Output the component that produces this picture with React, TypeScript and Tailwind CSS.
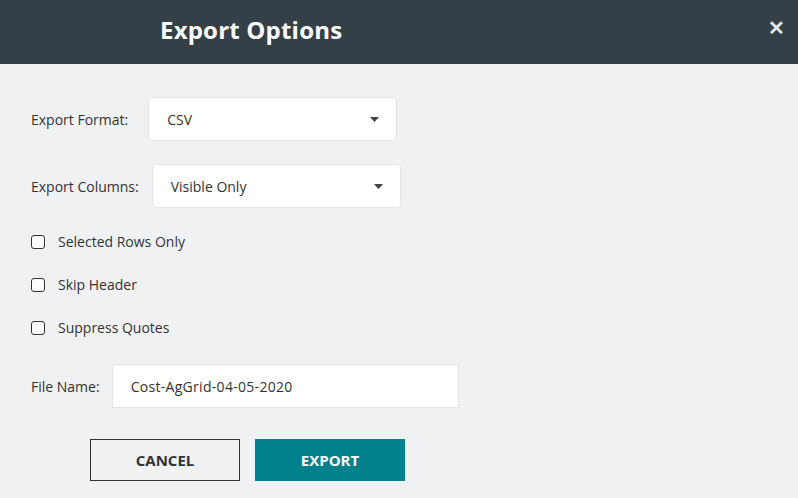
import { useState } from 'react';

function Caret() {
  return (
    <svg width="9" height="5" viewBox="0 0 9 5" aria-hidden="true">
      <path d="M0 0h9L4.5 5z" fill="#444" />
    </svg>
  );
}

function SelectBox({ value }: { value: string }) {
  return (
    <div className="flex h-[44px] w-[249px] items-center justify-between rounded-[4px] border border-[#e3e4e7] bg-white pl-[18px] pr-[17px] text-[14px] text-[#333]">
      <span>{value}</span>
      <Caret />
    </div>
  );
}

function Check({ label }: { label: string }) {
  const [on, setOn] = useState(false);
  return (
    <label className="flex h-[43px] cursor-pointer items-center gap-[13px] text-[14px] text-[#333]">
      <span
        onClick={() => setOn(!on)}
        className="h-[14px] w-[14px] rounded-[3px] border-[1.5px] border-[#333] bg-white"
      />
      {label}
    </label>
  );
}

export default function App() {
  return (
    <div
      className="flex h-[498px] w-[798px] flex-col bg-[#f0f1f3]"
      style={{ fontFamily: '"Open Sans", "Noto Sans", sans-serif' }}
    >
      {/* Header */}
      <div className="flex h-[64px] items-center justify-between bg-[#343f48] pl-[160px] pr-[13px]">
        <h1 className="-mt-[4px] text-[24px] font-bold tracking-[0.2px] text-white">Export Options</h1>
        <span className="-mt-[8px] text-[20px] font-bold leading-none text-[#e6e6e6]">✕</span>
      </div>

      {/* Body */}
      <div className="flex flex-col pl-[31px] pt-[33px]">
        <div className="flex items-center gap-[20px]">
          <span className="text-[14px] text-[#333]">Export Format:</span>
          <SelectBox value="CSV" />
        </div>
        <div className="mt-[23px] flex items-center gap-[13px]">
          <span className="text-[14px] text-[#333]">Export Columns:</span>
          <SelectBox value="Visible Only" />
        </div>

        <div className="mt-[12px] flex flex-col">
          <Check label="Selected Rows Only" />
          <Check label="Skip Header" />
          <Check label="Suppress Quotes" />
        </div>

        <div className="mt-[15px] flex items-center gap-[12px]">
          <span className="text-[14px] text-[#333]">File Name:</span>
          <div className="flex h-[44px] w-[347px] items-center border border-[#e3e4e7] bg-white pl-[18px] text-[14px] tracking-[0.3px] text-[#333]">
            Cost-AgGrid-04-05-2020
          </div>
        </div>

        <div className="mt-[31px] flex gap-[15px] pl-[59px]">
          <button className="h-[42px] w-[150px] border border-[#333] bg-[#f0f1f3] text-[15px] font-bold text-[#333]">
            CANCEL
          </button>
          <button className="h-[42px] w-[150px] bg-[#00808a] text-[15px] font-bold text-white">
            EXPORT
          </button>
        </div>
      </div>
    </div>
  );
}
